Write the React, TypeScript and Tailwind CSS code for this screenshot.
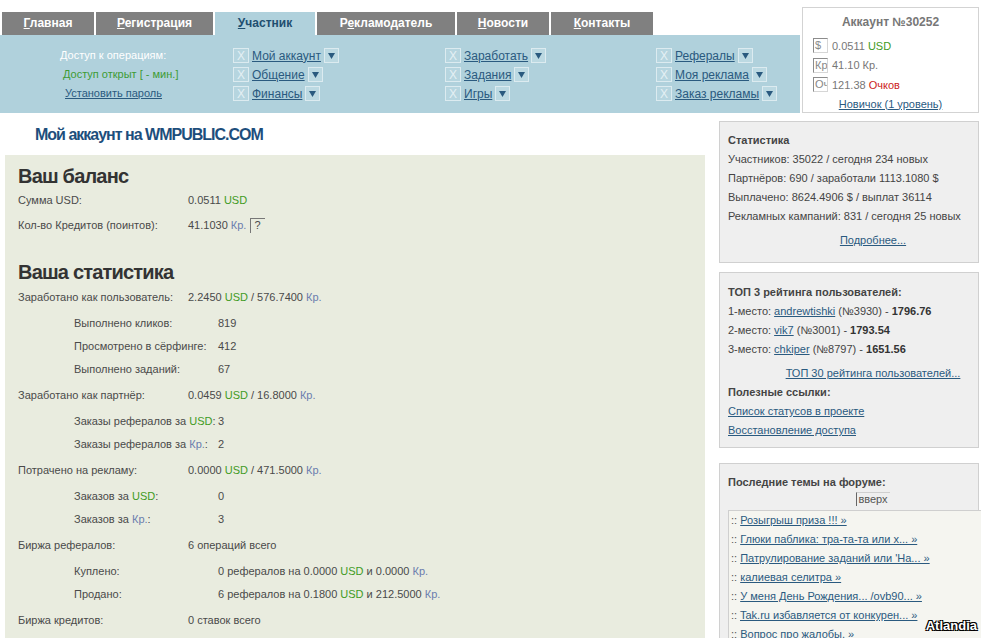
import React from 'react';

const tabs = [
  { pre: '', u: 'Г', post: 'лавная', w: 'w-[92px]', active: false },
  { pre: '', u: 'Р', post: 'егистрация', w: 'w-[117px]', active: false },
  { pre: '', u: 'У', post: 'частник', w: 'w-[100px]', active: true },
  { pre: 'Р', u: 'е', post: 'кламодатель', w: 'w-[138px]', active: false },
  { pre: '', u: 'Н', post: 'овости', w: 'w-[92px]', active: false },
  { pre: '', u: 'К', post: 'онтакты', w: 'w-[102px]', active: false },
];

const menuCols = [
  { w: 'w-[212px]', items: ['Мой аккаунт', 'Общение', 'Финансы'] },
  { w: 'w-[211px]', items: ['Заработать', 'Задания', 'Игры'] },
  { w: 'w-[140px]', items: ['Рефералы', 'Моя реклама', 'Заказ рекламы'] },
];

const forum = [
  'Розыгрыш приза !!! »',
  'Глюки паблика: тра-та-та или х... »',
  "Патрулирование заданий или 'На... »",
  'калиевая селитра »',
  'У меня День Рождения... /ovb90... »',
  'Tak.ru избавляется от конкурен... »',
  'Вопрос про жалобы. »',
];

function Usd() {
  return <span className="text-[#3f9b24]">USD</span>;
}

function Kr() {
  return <span className="text-[#6b7cae]">Кр.</span>;
}

function MenuItem({ label }: { label: string }) {
  return (
    <div className="flex h-[19px] items-center">
      <span className="flex h-[15px] w-[16px] items-center justify-center border border-[#dcebf0] bg-[#b6d5df] text-[12px] leading-none text-[#e4f0f4]">
        X
      </span>
      <a className="ml-[3px] text-[12px] text-[#2a5a7f] underline">{label}</a>
      <span className="ml-[3px] flex h-[15px] w-[15px] items-center justify-center border border-[#dcebf0] bg-[#bcd9e2]">
        <svg width="7" height="6" viewBox="0 0 7 6">
          <polygon points="0,0 7,0 3.5,6" fill="#2a5a7f" />
        </svg>
      </span>
    </div>
  );
}

function AccRow({ tag, children }: { tag: string; children: React.ReactNode }) {
  return (
    <div className="flex h-[19.5px] items-center">
      <span className="h-[15px] w-[15px] overflow-hidden border-t border-l border-r border-b border-t-[#8c8c8c] border-l-[#8c8c8c] border-r-[#d6d6d6] border-b-[#d6d6d6] pl-[1px] text-[11px] leading-[13px] text-[#888]">
        {tag}
      </span>
      <span className="ml-[4px] text-[11px] text-[#777]">{children}</span>
    </div>
  );
}

function MainRow({ label, children }: { label: string; children: React.ReactNode }) {
  return (
    <div className="flex h-[26px] items-center">
      <div className="w-[170px] shrink-0 whitespace-nowrap">{label}</div>
      <div className="whitespace-nowrap">{children}</div>
    </div>
  );
}

function SubRow({ label, children }: { label: React.ReactNode; children: React.ReactNode }) {
  return (
    <div className="flex h-[23px] items-center pl-[56px]">
      <div className="w-[144px] shrink-0 whitespace-nowrap">{label}</div>
      <div className="whitespace-nowrap">{children}</div>
    </div>
  );
}

function SubGroup({ children }: { children: React.ReactNode }) {
  return <div className="py-[1.5px]">{children}</div>;
}

export default function App() {
  return (
    <div className="relative h-[638px] w-[981px] overflow-hidden bg-white font-['Liberation_Sans',Arial,sans-serif] text-[11px] text-[#4a4a4a]">
      {/* top */}
      <div className="flex">
        <div className="w-[800px]">
          <div className="flex h-[35px] items-end gap-[2px] pl-[2px]">
            {tabs.map((t) => (
              <div
                key={t.u + t.post}
                className={
                  t.active
                    ? `${t.w} h-[23px] bg-[#b0d1dc] text-center text-[12px] font-bold leading-[23px] text-[#1f4f70]`
                    : `${t.w} h-[23px] bg-[#808080] text-center text-[12px] font-bold leading-[23px] text-white`
                }
              >
                {t.pre}
                <span className="underline">{t.u}</span>
                {t.post}
              </div>
            ))}
          </div>
          <div className="flex h-[78px] bg-[#b0d1dc] pt-[11px]">
            <div className="w-[233px] text-[11px]">
              <div className="flex h-[19px] items-center pl-[60px] text-white">Доступ к операциям:</div>
              <div className="flex h-[19px] items-center pl-[63px] text-[#3d9b34]">Доступ открыт [ - мин.]</div>
              <div className="flex h-[19px] items-center pl-[65px]">
                <a className="text-[#2a5a7f] underline">Установить пароль</a>
              </div>
            </div>
            {menuCols.map((c) => (
              <div key={c.items[0]} className={c.w}>
                {c.items.map((i) => (
                  <MenuItem key={i} label={i} />
                ))}
              </div>
            ))}
          </div>
        </div>
        <div className="ml-[2px] mt-[7px] h-[106px] w-[177px] border border-[#d3d3d3] bg-white">
          <div className="pt-[7px] text-center text-[12px] font-bold leading-[15px] text-[#777]">Аккаунт №30252</div>
          <div className="mt-[6px] pl-[10px]">
            <AccRow tag="$">
              0.0511 <Usd />
            </AccRow>
            <AccRow tag="Кр">41.10 Кр.</AccRow>
            <AccRow tag="Оч">
              121.38 <span className="text-[#cc2222]">Очков</span>
            </AccRow>
          </div>
          <div className="mt-[2px] text-center leading-[15px]">
            <a className="text-[#2a5a7f] underline">Новичок (1 уровень)</a>
          </div>
        </div>
      </div>

      {/* body */}
      <div className="flex">
        <div className="w-[705px] pl-[5px]">
          <div className="h-[42px] pl-[30px] pt-[12px] text-[16px] font-bold leading-[20px] tracking-[-1px] text-[#1d4e7c]">
            Мой аккаунт на WMPUBLIC.COM
          </div>
          <div className="h-[500px] bg-[#e9ecdf] pl-[13px] pt-[9px]">
            <div className="text-[20px] font-bold leading-[24px] tracking-[-0.8px] text-[#333]">Ваш баланс</div>
            <div className="flex h-[25px] items-center">
              <div className="w-[170px]">Сумма USD:</div>
              <div>
                0.0511 <Usd />
              </div>
            </div>
            <div className="flex h-[24px] items-center">
              <div className="w-[170px]">Кол-во Кредитов (поинтов):</div>
              <div className="flex items-center whitespace-pre">
                <span>41.1030 </span>
                <Kr />
                <span className="ml-[4px] h-[15px] w-[15px] border-t border-l border-t-[#777] border-l-[#777] pl-[3px] text-[11px] leading-[13px]">
                  ?
                </span>
              </div>
            </div>
            <div className="mt-[23px] text-[20px] font-bold leading-[24px] tracking-[-0.8px] text-[#333]">Ваша статистика</div>
            <MainRow label="Заработано как пользователь:">
              2.2450 <Usd /> / 576.7400 <Kr />
            </MainRow>
            <SubGroup>
              <SubRow label="Выполнено кликов:">819</SubRow>
              <SubRow label="Просмотрено в сёрфинге:">412</SubRow>
              <SubRow label="Выполнено заданий:">67</SubRow>
            </SubGroup>
            <MainRow label="Заработано как партнёр:">
              0.0459 <Usd /> / 16.8000 <Kr />
            </MainRow>
            <SubGroup>
              <SubRow
                label={
                  <>
                    Заказы рефералов за <Usd />:
                  </>
                }
              >
                3
              </SubRow>
              <SubRow
                label={
                  <>
                    Заказы рефералов за <Kr />:
                  </>
                }
              >
                2
              </SubRow>
            </SubGroup>
            <MainRow label="Потрачено на рекламу:">
              0.0000 <Usd /> / 471.5000 <Kr />
            </MainRow>
            <SubGroup>
              <SubRow
                label={
                  <>
                    Заказов за <Usd />:
                  </>
                }
              >
                0
              </SubRow>
              <SubRow
                label={
                  <>
                    Заказов за <Kr />:
                  </>
                }
              >
                3
              </SubRow>
            </SubGroup>
            <MainRow label="Биржа рефералов:">6 операций всего</MainRow>
            <SubGroup>
              <SubRow label="Куплено:">
                0 рефералов на 0.0000 <Usd /> и 0.0000 <Kr />
              </SubRow>
              <SubRow label="Продано:">
                6 рефералов на 0.1800 <Usd /> и 212.5000 <Kr />
              </SubRow>
            </SubGroup>
            <MainRow label="Биржа кредитов:">0 ставок всего</MainRow>
          </div>
        </div>

        {/* sidebar */}
        <div className="ml-[14px] w-[260px] pt-[8px] leading-[19px] text-[#444]">
          <div className="border border-[#d0d0d0] bg-[#efefef] pb-[12px] pl-[8px] pr-[8px] pt-[9px]">
            <div className="font-bold">Статистика</div>
            <div>Участников: 35022 / сегодня 234 новых</div>
            <div>Партнёров: 690 / заработали 1113.1080 $</div>
            <div>Выплачено: 8624.4906 $ / выплат 36114</div>
            <div className="whitespace-nowrap">Рекламных кампаний: 831 / сегодня 25 новых</div>
            <div className="mt-[5px] pl-[48px] text-center">
              <a className="text-[#2a5a7f] underline">Подробнее...</a>
            </div>
          </div>
          <div className="mt-[9px] border border-[#d0d0d0] bg-[#efefef] pb-[7px] pl-[8px] pr-[8px] pt-[10px]">
            <div className="font-bold">ТОП 3 рейтинга пользователей:</div>
            <div>
              1-место: <a className="text-[#2a5a7f] underline">andrewtishki</a> (№3930) -{' '}
              <b className="text-[#333]">1796.76</b>
            </div>
            <div>
              2-место: <a className="text-[#2a5a7f] underline">vik7</a> (№3001) - <b className="text-[#333]">1793.54</b>
            </div>
            <div>
              3-место: <a className="text-[#2a5a7f] underline">chkiper</a> (№8797) -{' '}
              <b className="text-[#333]">1651.56</b>
            </div>
            <div className="mt-[5px] pl-[48px] text-center">
              <a className="text-[#2a5a7f] underline">ТОП 30 рейтинга пользователей...</a>
            </div>
            <div className="font-bold">Полезные ссылки:</div>
            <div>
              <a className="text-[#2a5a7f] underline">Список статусов в проекте</a>
            </div>
            <div>
              <a className="text-[#2a5a7f] underline">Восстановление доступа</a>
            </div>
          </div>
          <div className="mt-[15px] h-[200px] border border-[#d0d0d0] bg-[#efefef] pl-[8px] pt-[9px]">
            <div className="font-bold">Последние темы на форуме:</div>
            <div className="flex h-[14px] justify-center pl-[48px] pr-[8px]">
              <span className="border-l border-t border-l-[#666] border-t-[#cfcfcf] pl-[1px] pr-[2px] leading-[13px] text-[#555]">
                вверх
              </span>
            </div>
            <div className="-mr-[12px] mt-[4px] border border-[#cfcfcf] bg-[#f5f5f0] pl-[2px]">
              {forum.map((f) => (
                <div key={f} className="whitespace-nowrap">
                  <span className="text-[#555]">:: </span>
                  <a className="text-[#2a5a7f] underline">{f}</a>
                </div>
              ))}
            </div>
          </div>
        </div>
      </div>

      <span className="absolute bottom-[3px] right-[4px] text-[13px] font-bold text-white [text-shadow:1px_1px_0_#000,-1px_-1px_0_#000,1px_-1px_0_#000,-1px_1px_0_#000]">
        Atlandia
      </span>
    </div>
  );
}
